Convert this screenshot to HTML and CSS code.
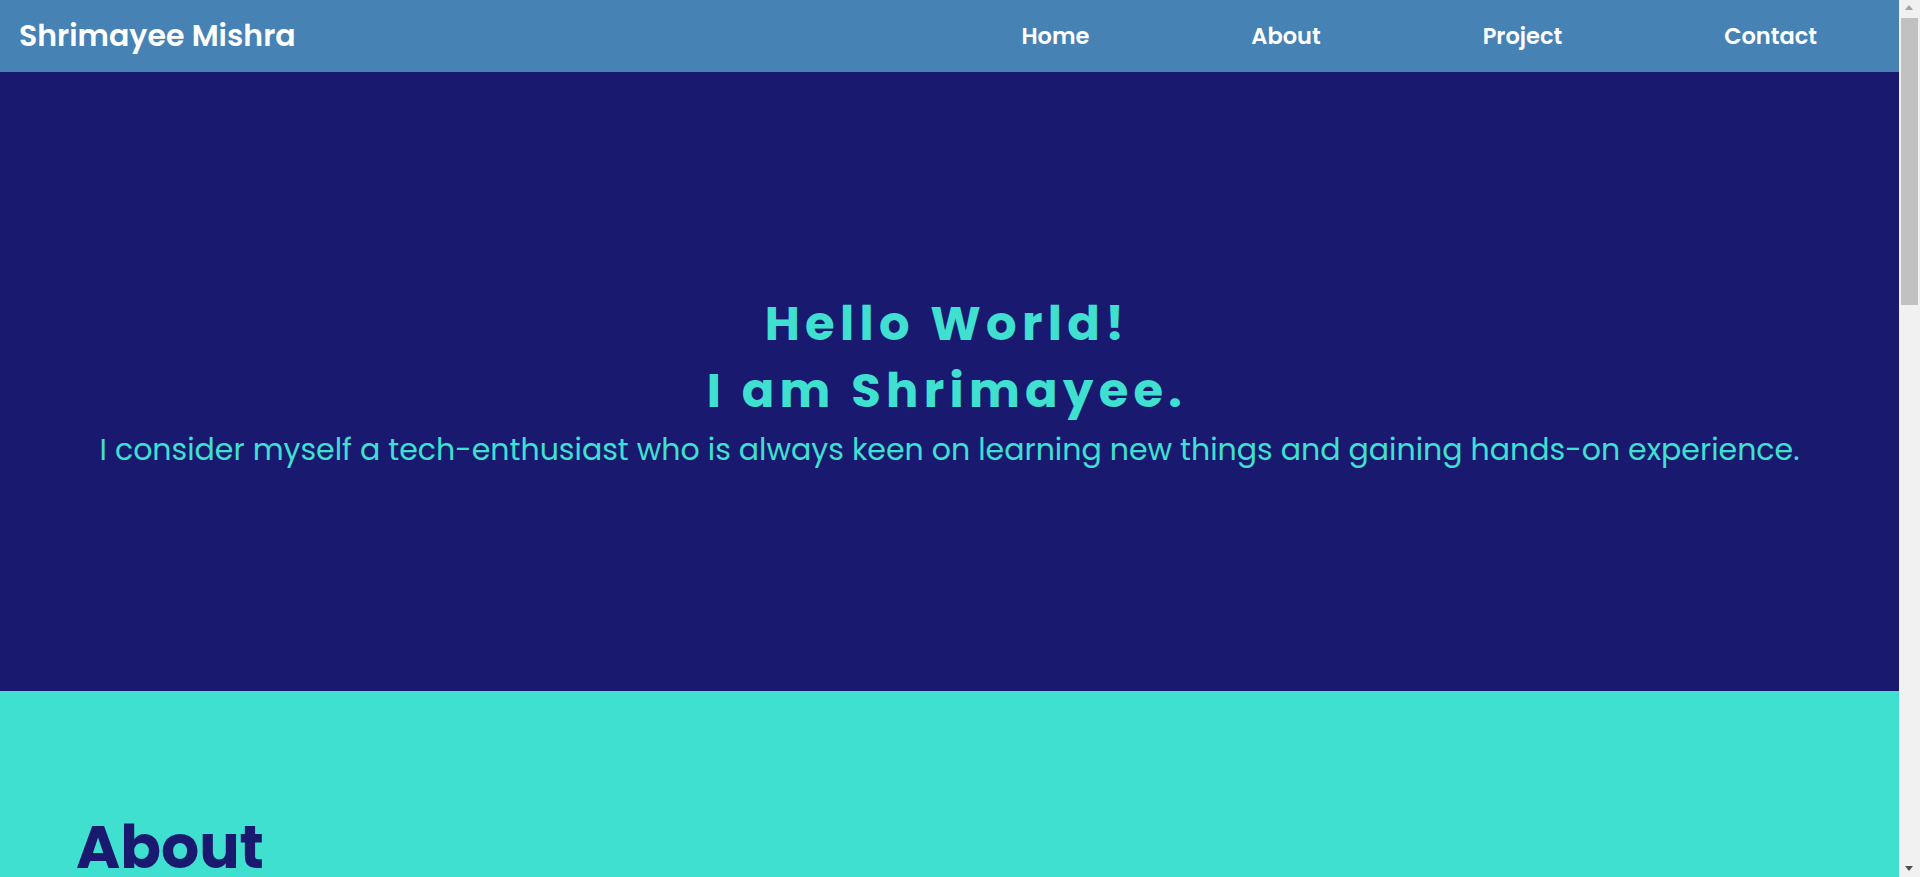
FILE: index.html
```html
<!DOCTYPE html>
<html lang="en">
<head>
<meta charset="utf-8">
<title>Shrimayee Mishra</title>
<link rel="stylesheet" href="styles.css">
</head>
<body>
<header class="topbar">
  <div class="logo">Shrimayee Mishra</div>
  <nav class="links">
    <a href="#home">Home</a>
    <a href="#about">About</a>
    <a href="#project">Project</a>
    <a href="#contact">Contact</a>
  </nav>
</header>
<section class="hero" id="home">
  <h1 class="hero-title">Hello World!<br>I am Shrimayee.</h1>
  <p class="hero-text">I consider myself a tech-enthusiast who is always keen on learning new things and gaining hands-on experience.</p>
</section>
<section class="about" id="about">
  <h2 class="section-title">About</h2>
  <p class="section-text">I am a student who loves building things for the web and exploring new technologies.</p>
</section>
<section class="project" id="project">
  <h2 class="section-title">Project</h2>
</section>
<section class="contact" id="contact">
  <h2 class="section-title">Contact</h2>
</section>
<div class="scrollbar" aria-hidden="true">
  <span class="arrow-up"></span>
  <span class="thumb"></span>
  <span class="arrow-down"></span>
</div>
</body>
</html>
```
FILE: styles.css
```css
* { box-sizing: border-box; }
html, body { overflow-x: hidden; }
body {
  margin: 0 21px 0 0;
  font-family: "Poppins", "Inter", "Noto Sans", sans-serif;
}
.topbar {
  height: 72px;
  background: #4682b4;
  display: flex;
  align-items: center;
  justify-content: space-between;
  padding: 0 82px 0 19px;
}
.logo {
  color: #fff;
  font-size: 30px;
  font-weight: 600;
}
.links {
  display: flex;
  gap: 162px;
}
.links a {
  color: #fff;
  text-decoration: none;
  font-size: 22.5px;
  font-weight: 600;
}
.hero {
  height: 619px;
  background: #191970;
  color: #40e0d0;
  display: flex;
  flex-direction: column;
  align-items: center;
  justify-content: center;
  text-align: center;
  padding-bottom: 2px;
}
.hero-title {
  margin: 0;
  padding-right: 5px;
  font-size: 48px;
  font-weight: 700;
  line-height: 67px;
  letter-spacing: 5.3px;
}
.hero-text {
  margin: 3px 0 0;
  font-size: 30px;
  font-weight: 400;
  line-height: 45px;
}
.about, .project, .contact {
  padding: 111px 76px 0;
}
.about {
  background: #40e0d0;
  height: 700px;
}
.project {
  background: #191970;
  color: #40e0d0;
  height: 600px;
}
.contact {
  background: #4682b4;
  color: #fff;
  height: 585px;
}
.section-title {
  margin: 0;
  font-size: 60px;
  font-weight: 700;
  line-height: normal;
  color: #191970;
}
.project .section-title { color: #40e0d0; }
.contact .section-title { color: #fff; }
.section-text {
  font-size: 24px;
  color: #191970;
}
.scrollbar {
  position: fixed;
  top: 0;
  right: 0;
  width: 21px;
  height: 100vh;
  background: #f1f1f1;
}
.arrow-up, .arrow-down {
  position: absolute;
  left: 6px;
  width: 0;
  height: 0;
  border-left: 4.5px solid transparent;
  border-right: 4.5px solid transparent;
}
.arrow-up {
  top: 5px;
  border-bottom: 5px solid #a3a3a3;
}
.arrow-down {
  bottom: 6px;
  border-top: 5px solid #505050;
}
.thumb {
  position: absolute;
  top: 18px;
  left: 2px;
  width: 17px;
  height: 287px;
  background: #c1c1c1;
}
```
